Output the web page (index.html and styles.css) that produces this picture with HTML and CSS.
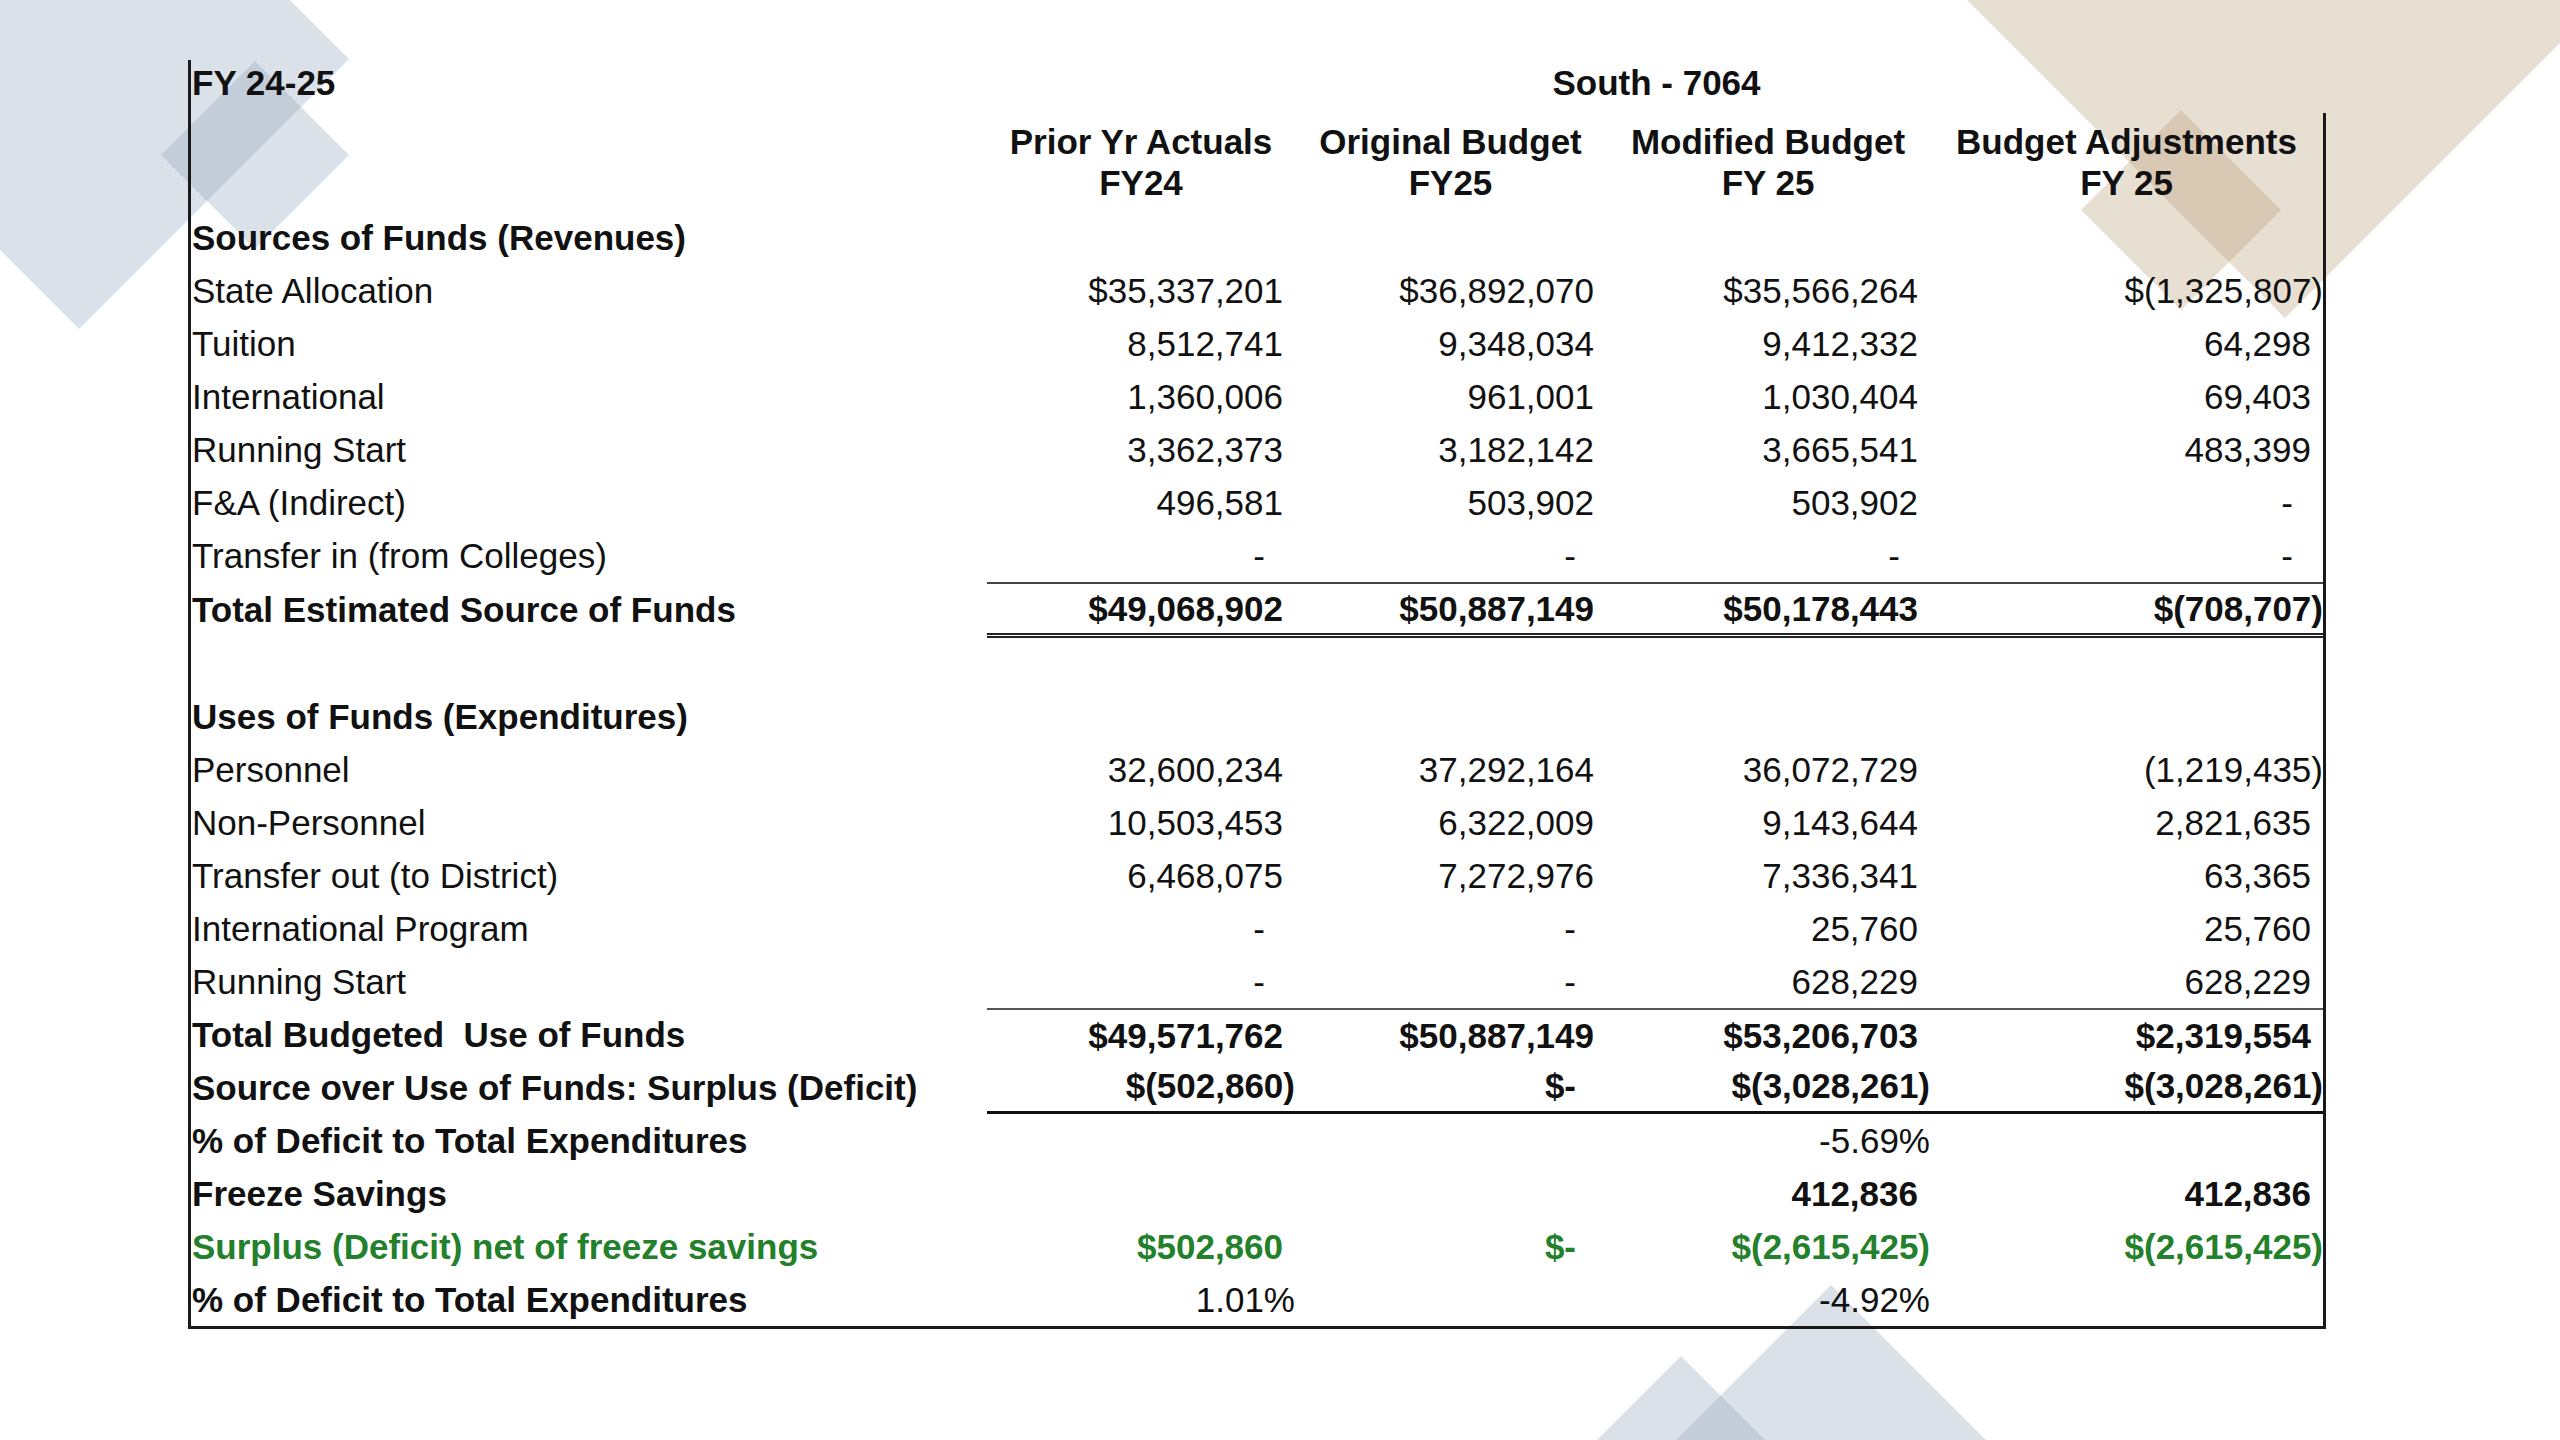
FILE: index.html
```html
<!DOCTYPE html>
<html lang="en">
<head>
<meta charset="utf-8">
<title>FY 24-25 South - 7064</title>
<link rel="stylesheet" href="styles.css">
</head>
<body>
<svg class="deco" width="2560" height="1440" viewBox="0 0 2560 1440" aria-hidden="true">
  <polygon class="blue" points="79,-211 349,59 79,329 -191,59"/>
  <polygon class="blue" points="255,61 349,155 255,249 161,155"/>
  <polygon class="beige" points="2285,-482 2685,-82 2285,318 1885,-82"/>
  <polygon class="beige" points="2181,110 2281,210 2181,310 2081,210"/>
  <polygon class="blue" points="1831,1285 2131,1585 1831,1885 1531,1585"/>
  <polygon class="blue" points="1681,1356 1981,1656 1681,1956 1381,1656"/>
</svg>

<main class="sheet">
  <div class="title-row">
    <div class="t-left">FY 24-25</div>
    <div class="t-center">South - 7064</div>
  </div>
  <div class="body">
    <div class="row head">
      <div class="c lbl"></div>
      <div class="c">Prior Yr Actuals<br>FY24</div>
      <div class="c">Original Budget<br>FY25</div>
      <div class="c">Modified Budget<br>FY 25</div>
      <div class="c">Budget Adjustments<br>FY 25</div>
    </div>

    <div class="row">
      <div class="c lbl b">Sources of Funds (Revenues)</div>
      <div class="c"></div><div class="c"></div><div class="c"></div><div class="c"></div>
    </div>
    <div class="row">
      <div class="c lbl">State Allocation</div>
      <div class="c n">$35,337,201</div>
      <div class="c n">$36,892,070</div>
      <div class="c n">$35,566,264</div>
      <div class="c ng">$(1,325,807)</div>
    </div>
    <div class="row">
      <div class="c lbl">Tuition</div>
      <div class="c n">8,512,741</div>
      <div class="c n">9,348,034</div>
      <div class="c n">9,412,332</div>
      <div class="c n">64,298</div>
    </div>
    <div class="row">
      <div class="c lbl">International</div>
      <div class="c n">1,360,006</div>
      <div class="c n">961,001</div>
      <div class="c n">1,030,404</div>
      <div class="c n">69,403</div>
    </div>
    <div class="row">
      <div class="c lbl">Running Start</div>
      <div class="c n">3,362,373</div>
      <div class="c n">3,182,142</div>
      <div class="c n">3,665,541</div>
      <div class="c n">483,399</div>
    </div>
    <div class="row">
      <div class="c lbl">F&amp;A (Indirect)</div>
      <div class="c n">496,581</div>
      <div class="c n">503,902</div>
      <div class="c n">503,902</div>
      <div class="c d">-</div>
    </div>
    <div class="row">
      <div class="c lbl">Transfer in (from Colleges)</div>
      <div class="c d">-</div>
      <div class="c d">-</div>
      <div class="c d">-</div>
      <div class="c d">-</div>
    </div>
    <div class="row tot b">
      <div class="c lbl">Total Estimated Source of Funds</div>
      <div class="c n">$49,068,902</div>
      <div class="c n">$50,887,149</div>
      <div class="c n">$50,178,443</div>
      <div class="c ng">$(708,707)</div>
    </div>
    <div class="row blank">
      <div class="c lbl"></div>
    </div>
    <div class="row">
      <div class="c lbl b">Uses of Funds (Expenditures)</div>
      <div class="c"></div><div class="c"></div><div class="c"></div><div class="c"></div>
    </div>
    <div class="row">
      <div class="c lbl">Personnel</div>
      <div class="c n">32,600,234</div>
      <div class="c n">37,292,164</div>
      <div class="c n">36,072,729</div>
      <div class="c ng">(1,219,435)</div>
    </div>
    <div class="row">
      <div class="c lbl">Non-Personnel</div>
      <div class="c n">10,503,453</div>
      <div class="c n">6,322,009</div>
      <div class="c n">9,143,644</div>
      <div class="c n">2,821,635</div>
    </div>
    <div class="row">
      <div class="c lbl">Transfer out (to District)</div>
      <div class="c n">6,468,075</div>
      <div class="c n">7,272,976</div>
      <div class="c n">7,336,341</div>
      <div class="c n">63,365</div>
    </div>
    <div class="row">
      <div class="c lbl">International Program</div>
      <div class="c d">-</div>
      <div class="c d">-</div>
      <div class="c n">25,760</div>
      <div class="c n">25,760</div>
    </div>
    <div class="row">
      <div class="c lbl">Running Start</div>
      <div class="c d">-</div>
      <div class="c d">-</div>
      <div class="c n">628,229</div>
      <div class="c n">628,229</div>
    </div>
    <div class="row tb b">
      <div class="c lbl">Total Budgeted  Use of Funds</div>
      <div class="c n">$49,571,762</div>
      <div class="c n">$50,887,149</div>
      <div class="c n">$53,206,703</div>
      <div class="c n">$2,319,554</div>
    </div>
    <div class="row sou b">
      <div class="c lbl">Source over Use of Funds: Surplus (Deficit)</div>
      <div class="c ng">$(502,860)</div>
      <div class="c d">$-</div>
      <div class="c ng">$(3,028,261)</div>
      <div class="c ng">$(3,028,261)</div>
    </div>
    <div class="row">
      <div class="c lbl b">% of Deficit to Total Expenditures</div>
      <div class="c"></div>
      <div class="c"></div>
      <div class="c ng">-5.69%</div>
      <div class="c"></div>
    </div>
    <div class="row b">
      <div class="c lbl">Freeze Savings</div>
      <div class="c"></div>
      <div class="c"></div>
      <div class="c n">412,836</div>
      <div class="c n">412,836</div>
    </div>
    <div class="row b g">
      <div class="c lbl">Surplus (Deficit) net of freeze savings</div>
      <div class="c n">$502,860</div>
      <div class="c d">$-</div>
      <div class="c ng">$(2,615,425)</div>
      <div class="c ng">$(2,615,425)</div>
    </div>
    <div class="row">
      <div class="c lbl b">% of Deficit to Total Expenditures</div>
      <div class="c ng">1.01%</div>
      <div class="c"></div>
      <div class="c ng">-4.92%</div>
      <div class="c"></div>
    </div>
  </div>
</main>
</body>
</html>
```

FILE: styles.css
```css
* {
  box-sizing: border-box;
}

html,
body {
  margin: 0;
}

body {
  position: relative;
  width: 2560px;
  height: 1440px;
  overflow: hidden;
  padding: 60px 0 0 188px;
  background: #ffffff;
  font-family: "Liberation Sans", Arial, sans-serif;
  font-size: 35px;
  color: #111111;
}

.deco {
  position: absolute;
  left: 0;
  top: 0;
  z-index: 0;
}

.deco .blue {
  fill: rgba(150, 170, 190, 0.35);
}

.deco .beige {
  fill: rgba(180, 150, 110, 0.3);
}

.sheet {
  position: relative;
  z-index: 1;
  width: 2138px;
  border-left: 3px solid #1a1a1a;
  border-bottom: 3px solid #1a1a1a;
}

.title-row {
  display: grid;
  grid-template-columns: 796px 1fr;
  height: 53px;
  font-weight: bold;
  line-height: 41px;
  padding-top: 2px;
}

.t-left {
  padding-left: 1px;
}

.t-center {
  text-align: center;
}

.body {
  border-right: 3px solid #1a1a1a;
}

.row {
  display: grid;
  grid-template-columns: 796px 308px 311px 324px 1fr;
  height: 53px;
}

.c {
  display: flex;
  align-items: center;
  justify-content: flex-end;
  white-space: pre;
}

.lbl {
  justify-content: flex-start;
  padding-left: 1px;
}

.n {
  padding-right: 12px;
}

.ng {
  padding-right: 0;
}

.d {
  padding-right: 30px;
}

.b {
  font-weight: bold;
}

.g {
  color: #23802b;
}

.head {
  height: 98px;
}

.head .c {
  justify-content: center;
  align-items: flex-start;
  text-align: center;
  line-height: 41px;
  padding-top: 8px;
  font-weight: bold;
}

.tot {
  height: 56px;
}

.blank {
  height: 52px;
}

.tot .c:not(.lbl) {
  border-top: 2px solid #444444;
  border-bottom: 5px double #222222;
}

.tb .c:not(.lbl) {
  border-top: 2px solid #555555;
}

.sou .c:not(.lbl) {
  border-bottom: 3px solid #111111;
}
```
